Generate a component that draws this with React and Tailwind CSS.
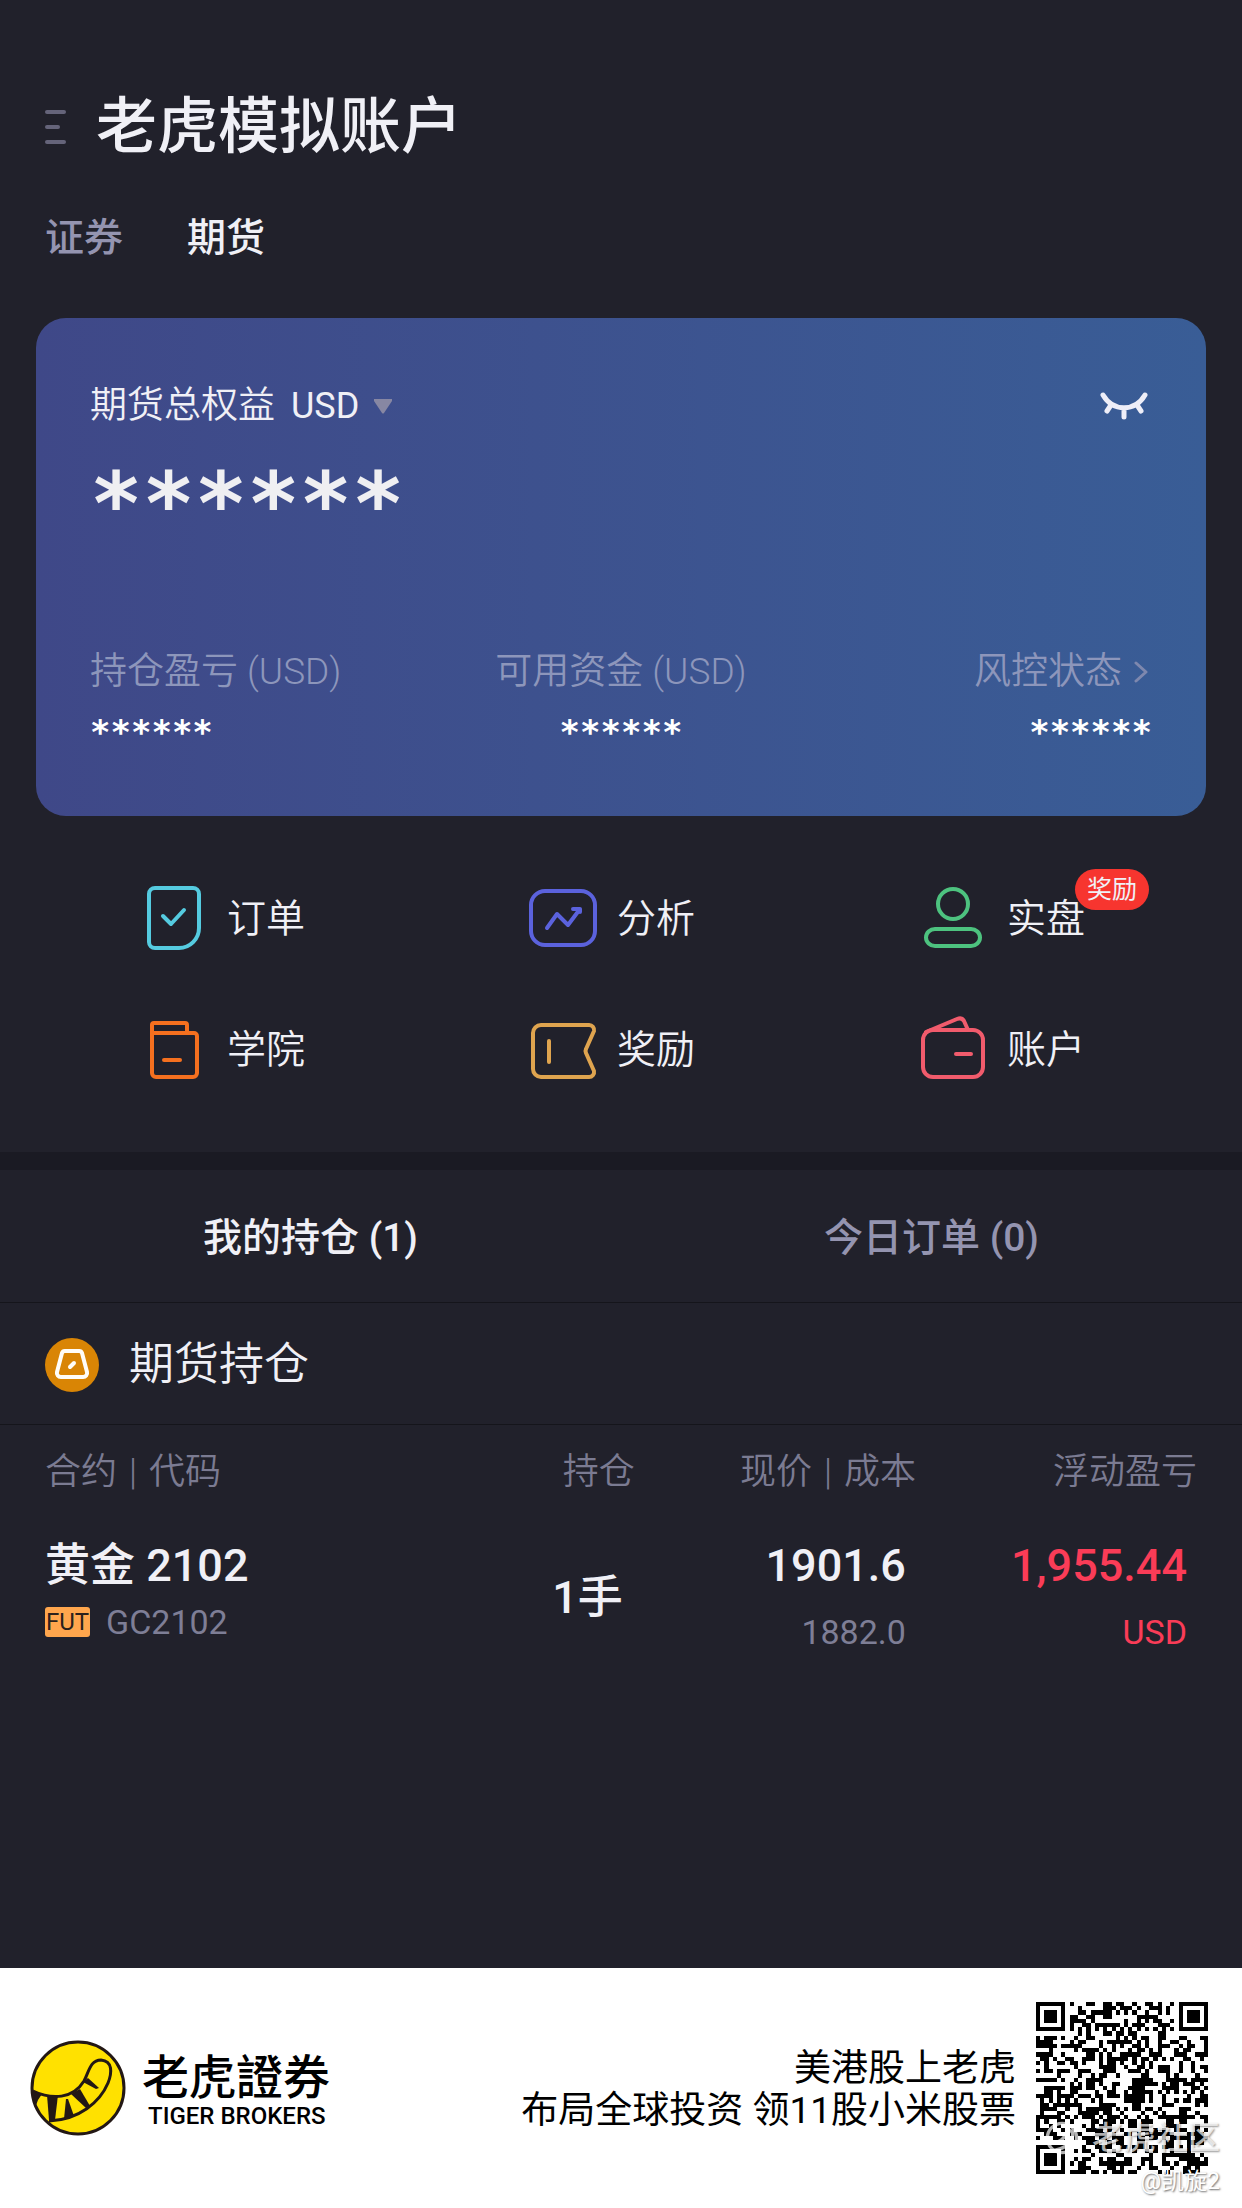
import React, { useState } from "react";

const strokeProps = {
  fill: "none",
  strokeWidth: 4,
  strokeLinecap: "round",
  strokeLinejoin: "round",
};

function OrderIcon() {
  return (
    <svg viewBox="0 0 80 80" className="h-20 w-20 shrink-0" stroke="#55cbe0" {...strokeProps} aria-hidden="true">
      <path d="M21 9H59a6 6 0 0 1 6 6V49a20 20 0 0 1-20 20H21a6 6 0 0 1-6-6V15a6 6 0 0 1 6-6z" />
      <path d="M29 37l8 8L50 31" />
    </svg>
  );
}

function AnalysisIcon() {
  return (
    <svg viewBox="0 0 80 80" className="h-20 w-20 shrink-0" stroke="#5b62dd" {...strokeProps} aria-hidden="true">
      <rect x="7" y="12" width="64" height="54" rx="14" />
      <path d="M23 49L33 35 44 46 56 30M49 30h7v3" />
    </svg>
  );
}

function PersonIcon() {
  return (
    <svg viewBox="0 0 80 80" className="h-20 w-20 shrink-0" stroke="#4dc27f" {...strokeProps} aria-hidden="true">
      <circle cx="39" cy="25" r="15" />
      <rect x="12" y="50" width="54" height="17" rx="9" />
    </svg>
  );
}

function AcademyIcon() {
  return (
    <svg viewBox="0 0 80 80" className="h-20 w-20 shrink-0" stroke="#f5701f" {...strokeProps} aria-hidden="true">
      <path d="M18 24V15a2 2 0 0 1 2-2H51a2 2 0 0 1 2 2V23" />
      <path d="M18 23H60a3 3 0 0 1 3 3V63a4 4 0 0 1-4 4H22a4 4 0 0 1-4-4z" />
      <path d="M30 50H46" />
    </svg>
  );
}

function RewardIcon() {
  return (
    <svg viewBox="0 0 80 80" className="h-20 w-20 shrink-0" stroke="#dfa44f" {...strokeProps} aria-hidden="true">
      <path d="M17 15H65a5 5 0 0 1 5 6L62 39q-1 2 0 4L70 61a5 5 0 0 1-5 6H17a8 8 0 0 1-8-8V23a8 8 0 0 1 8-8z" />
      <path d="M25 31V52" />
    </svg>
  );
}

function WalletIcon() {
  return (
    <svg viewBox="0 0 80 80" className="h-20 w-20 shrink-0" stroke="#f15b6c" {...strokeProps} aria-hidden="true">
      <rect x="9" y="20" width="60" height="47" rx="10" />
      <path d="M12 22L43 9q5-2 7 2L54 20" />
      <path d="M42 44H57" />
    </svg>
  );
}

function FuturesIcon() {
  return (
    <svg viewBox="0 0 54 54" className="h-[54px] w-[54px] shrink-0" aria-hidden="true">
      <circle cx="27" cy="27" r="27" fill="#d98505" />
      <g stroke="#fffdf8" {...strokeProps}>
        <path d="M20 13H34a3 3 0 0 1 3 2L42 34a4 4 0 0 1-4 5H16a4 4 0 0 1-4-5L17 15a3 3 0 0 1 3-2z" />
        <path d="M25 29L29 25" />
      </g>
    </svg>
  );
}

function TigerLogo() {
  return (
    <svg viewBox="0 0 96 96" className="h-24 w-24 shrink-0" role="img" aria-label="老虎證券">
      <circle cx="48" cy="48" r="46" fill="#ffe100" />
      <g fill="#231815">
        <path d="M2 50L12 54 8 60 5 68z" />
        <path d="M17 55H28L25 80H19z" />
        <path d="M36 59h2L44 76 34 79z" />
        <path d="M41 54L50 49 60 66 57 69z" />
        <path d="M53 42L58 38 69 48 66 49z" />
      </g>
      <g fill="none" stroke="#231815" strokeWidth="3">
        <path d="M3 51C22 60 43 59 54 41C59 32 60 20 71 20C83 21 82 33 78 43C70 62 49 80 19 81" />
        <circle cx="48" cy="48" r="46" />
      </g>
    </svg>
  );
}

const QR_SIZE = 41;

function finderModule(row, col) {
  const corners = [
    [0, 0],
    [0, QR_SIZE - 7],
    [QR_SIZE - 7, 0],
  ];
  for (const [top, left] of corners) {
    const r = row - top;
    const c = col - left;
    if (r >= -1 && r <= 7 && c >= -1 && c <= 7) {
      if (r < 0 || r > 6 || c < 0 || c > 6) return false;
      const ring = Math.max(Math.abs(r - 3), Math.abs(c - 3));
      return ring !== 2;
    }
  }
  const ring = Math.max(Math.abs(row - 34), Math.abs(col - 34));
  if (ring <= 2) return ring !== 1;
  if (row === 6) return col % 2 === 0;
  if (col === 6) return row % 2 === 0;
  return null;
}

function buildQrPath() {
  let seed = 20210211;
  let d = "";
  for (let row = 0; row < QR_SIZE; row += 1) {
    for (let col = 0; col < QR_SIZE; col += 1) {
      seed = (seed * 1103515245 + 12345) % 2147483648;
      const fixed = finderModule(row, col);
      const dark = fixed === null ? seed / 2147483648 < 0.52 : fixed;
      if (dark) d += `M${col} ${row}h1v1h-1z`;
    }
  }
  return d;
}

const qrPath = buildQrPath();

const actions = [
  { label: "订单", Icon: OrderIcon },
  { label: "分析", Icon: AnalysisIcon },
  { label: "实盘", Icon: PersonIcon, badge: "奖励" },
  { label: "学院", Icon: AcademyIcon },
  { label: "奖励", Icon: RewardIcon },
  { label: "账户", Icon: WalletIcon },
];

function Mask({ className }) {
  return <span className={`block font-['DejaVu_Sans_Mono',monospace] font-bold ${className}`}>******</span>;
}

function Bar() {
  return <span className="mx-3">|</span>;
}

export default function App() {
  const [tab, setTab] = useState("positions");

  return (
    <div className="flex min-h-screen flex-col bg-[#21212b] font-['Roboto','Noto_Sans_CJK_SC',sans-serif] text-[#f0f0f6]">
      <header className="px-[45px] pt-[87px]">
        <div className="flex items-center gap-[30px]">
          <button type="button" aria-label="菜单" className="flex w-[21px] flex-col gap-[11px]">
            <span className="h-1 w-full rounded-sm bg-[#65647a]" />
            <span className="h-1 w-[15px] rounded-sm bg-[#65647a]" />
            <span className="h-1 w-full rounded-sm bg-[#65647a]" />
          </button>
          <h1 className="text-[61px] leading-[80px] font-medium">老虎模拟账户</h1>
        </div>
        <nav className="mt-[41px] flex gap-16 text-[39px] leading-[60px] font-medium">
          <button type="button" className="text-[#9494b0]">证券</button>
          <button type="button">期货</button>
        </nav>
      </header>

      <main>
        <section className="mx-9 mt-[50px] rounded-[30px] bg-linear-to-r from-[#3f4888] to-[#395d96] px-[54px] pt-[62px] pb-16">
          <div className="flex items-center justify-between text-[37px] leading-[52px]">
            <div className="flex items-center">
              <label htmlFor="currency" className="font-[350]">期货总权益</label>
              <select id="currency" className="ml-4 appearance-none bg-transparent text-4xl leading-[52px]">
                <option>USD</option>
              </select>
              <svg viewBox="0 0 18 15" className="ml-3.5 h-[15px] w-[18px]" fill="#8787a3" aria-hidden="true">
                <path d="M1 0H17a1 1 0 0 1 1 2L10 14q-1 1-2 0L0 2a1 1 0 0 1 1-2z" />
              </svg>
            </div>
            <button type="button" aria-label="显示金额" className="mr-1">
              <svg viewBox="0 0 48 28" className="h-7 w-12" fill="none" stroke="#eeeef8" strokeWidth="5" strokeLinecap="round" aria-hidden="true">
                <path d="M3 3C13 20 35 20 45 3M24 16V25M11 13L7 19M37 13L41 19" />
              </svg>
            </button>
          </div>
          <Mask className="mt-8 text-[87px] leading-[80px] text-[#efeff2]" />
          <div className="mt-[102px] grid grid-cols-3 text-[37px] leading-[52px] font-[350] text-[#8d96bb]">
            <div>
              持仓盈亏 (USD)
              <Mask className="mt-3.5 text-[34px] leading-10 text-white" />
            </div>
            <div className="text-center">
              可用资金 (USD)
              <Mask className="mt-3.5 text-[34px] leading-10 text-white" />
            </div>
            <div className="text-right">
              <a href="#risk" className="mr-1 inline-flex items-center gap-3">
                风控状态
                <svg viewBox="0 0 14 22" className="h-[22px] w-3.5" fill="none" stroke="#7e88ae" strokeWidth="3" strokeLinecap="round" strokeLinejoin="round" aria-hidden="true">
                  <path d="M2 2L12 11 2 20" />
                </svg>
              </a>
              <Mask className="mt-3.5 text-[34px] leading-10 text-white" />
            </div>
          </div>
        </section>

        <section className="mx-9 mt-[63px] grid grid-cols-3 gap-y-[51px] pb-[62px]">
          {actions.map(({ label, Icon, badge }) => (
            <button key={label} type="button" className="flex items-center gap-[13px] pl-[98px] text-[39px] leading-[60px] font-[350]">
              <Icon />
              <span className="relative whitespace-nowrap">
                {label}
                {badge && (
                  <span className="absolute -top-5 left-[68px] rounded-full bg-[#f7352f] px-3 text-[25px] leading-[41px] font-normal">
                    {badge}
                  </span>
                )}
              </span>
            </button>
          ))}
        </section>

        <div className="h-[18px] bg-[#1a1a23]" />

        <div role="tablist" className="grid grid-cols-2 border-b border-[#15151b] text-[39px] leading-[60px] font-medium">
          <button
            type="button"
            role="tab"
            aria-selected={tab === "positions"}
            onClick={() => setTab("positions")}
            className={tab === "positions" ? "pt-[38px] pb-[34px]" : "pt-[38px] pb-[34px] text-[#9494b0]"}
          >
            我的持仓 (1)
          </button>
          <button
            type="button"
            role="tab"
            aria-selected={tab === "orders"}
            onClick={() => setTab("orders")}
            className={tab === "orders" ? "pt-[38px] pb-[34px]" : "pt-[38px] pb-[34px] text-[#9494b0]"}
          >
            今日订单 (0)
          </button>
        </div>

        <section>
          <h2 className="flex items-center gap-[30px] border-b border-[#15151b] px-[45px] pt-8 pb-[29px] text-[45px] leading-[60px] font-[350]">
            <FuturesIcon />
            期货持仓
          </h2>
          <div className="px-[45px]">
            <table className="w-full table-fixed text-right">
              <thead>
                <tr className="text-4xl leading-[52px] text-[#7b7b92]">
                  <th className="pt-[21px] pb-5 text-left font-[350]">合约<Bar />代码</th>
                  <th className="w-[24.4%] pt-[21px] pb-5 font-[350]">持仓</th>
                  <th className="w-[24.4%] pt-[21px] pb-5 font-[350]">现价<Bar />成本</th>
                  <th className="w-[24.4%] pt-[21px] pb-5 font-[350]">浮动盈亏</th>
                </tr>
              </thead>
              <tbody>
                <tr className="text-[45px] leading-[60px]">
                  <td className="pt-[18px] pb-6 text-left align-top">
                    <p className="font-medium">黄金 2102</p>
                    <p className="mt-1 flex items-center gap-4 text-[34px] leading-[44px] text-[#7e7e96]">
                      <span className="w-[45px] rounded-[3px] bg-[#ffa64d] text-center text-2xl leading-[30px] text-[#2b211c]">FUT</span>
                      GC2102
                    </p>
                  </td>
                  <td className="pr-3 align-middle font-medium">1手</td>
                  <td className="pt-[18px] pr-2.5 pb-6 align-top">
                    <p className="font-medium">1901.6</p>
                    <p className="mt-3.5 text-[34px] leading-[44px] text-[#7e7e96]">1882.0</p>
                  </td>
                  <td className="pt-[18px] pr-2.5 pb-6 align-top text-[#fa3c57]">
                    <p className="font-medium">1,955.44</p>
                    <p className="mt-3.5 text-[34px] leading-[44px]">USD</p>
                  </td>
                </tr>
              </tbody>
            </table>
          </div>
        </section>
      </main>

      <footer className="mt-auto flex items-center justify-between bg-white py-[34px] pr-[34px] pl-[30px] text-black">
        <div className="flex items-center gap-4">
          <TigerLogo />
          <div className="pt-1">
            <p className="font-['Noto_Sans_CJK_TC',sans-serif] text-[47px] leading-[52px] font-medium">老虎證券</p>
            <p className="pl-1.5 text-2xl leading-8 font-medium">TIGER BROKERS</p>
          </div>
        </div>
        <div className="flex items-center gap-5">
          <p className="pt-1 text-right text-[37px] leading-[42px]">
            美港股上老虎
            <br />
            布局全球投资 领11股小米股票
          </p>
          <div className="relative">
            <svg viewBox="0 0 41 41" className="h-[172px] w-[172px]" shapeRendering="crispEdges" role="img" aria-label="二维码">
              <path d={qrPath} fill="#000" />
            </svg>
            <p className="absolute -right-3 bottom-4 flex items-center gap-3 text-[32px] leading-10 font-medium whitespace-nowrap text-white/70 [text-shadow:1px_1px_2px_#0006]">
              <svg viewBox="0 0 32 32" className="h-9 w-9" fill="none" stroke="currentColor" strokeWidth="3" aria-hidden="true">
                <circle cx="16" cy="16" r="13" />
                <path d="M4 20C14 22 18 16 22 9q5 1 3 7C22 23 16 26 9 27" />
              </svg>
              老虎社区
            </p>
            <p className="absolute -right-3 -bottom-6 text-[23px] leading-8 whitespace-nowrap text-white [text-shadow:1px_1px_2px_#0009]">@凯旋2</p>
          </div>
        </div>
      </footer>
    </div>
  );
}
